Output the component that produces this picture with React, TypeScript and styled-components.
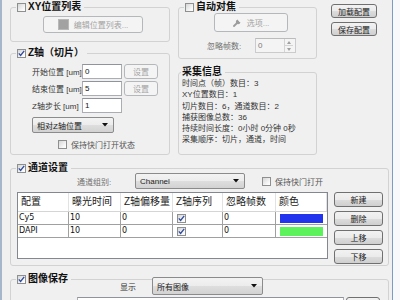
import styled, { createGlobalStyle } from 'styled-components';

const GlobalStyle = createGlobalStyle`
  html, body {
    margin: 0;
    padding: 0;
  }
  body {
    width: 400px;
    height: 300px;
    overflow: hidden;
    background: #f8f9fa;
    font-family: 'Liberation Sans', 'Noto Sans CJK SC', sans-serif;
    color: #222;
  }
`;

const Screen = styled.div`
  width: 400px;
  height: 300px;
  overflow: hidden;
`;

const Frame = styled.div`
  box-sizing: border-box;
  width: 393px;
  height: 300px;
  border-left: 2px solid #a5b6cb;
  border-right: 1px solid #7d9bc4;
  background: #f0f0f0;
  padding: 1px 3px 0 8px;
  display: flex;
  flex-direction: column;
  gap: 7px;
  overflow: hidden;
`;

const TopSection = styled.div`
  display: flex;
  align-items: flex-start;
  height: 154px;
  flex-shrink: 0;
`;

const Column = styled.div<{ $w: number; $ml?: number; $gap: number; $mt?: number }>`
  width: ${(p) => p.$w}px;
  margin-left: ${(p) => p.$ml || 0}px;
  margin-top: ${(p) => p.$mt || 0}px;
  display: flex;
  flex-direction: column;
  gap: ${(p) => p.$gap}px;
  flex-shrink: 0;
`;

const Group = styled.fieldset<{ $h?: number; $pl?: number }>`
  margin: 0;
  min-width: 0;
  box-sizing: border-box;
  padding: 0 6px 0 ${(p) => (p.$pl === undefined ? 6 : p.$pl)}px;
  border: 1px solid #d2d2d2;
  border-radius: 3px;
  height: ${(p) => (p.$h ? `${p.$h}px` : 'auto')};
  flex-shrink: 0;
`;

const Legend = styled.legend`
  display: flex;
  align-items: center;
  gap: 2px;
  padding: 0 3px 0 1px;
  margin-left: -1px;
  height: 12px;
  line-height: 12px;
  font-size: 10px;
  font-weight: bold;
  color: #111;
`;

const CheckBox = styled.span`
  width: 9px;
  height: 9px;
  box-sizing: border-box;
  border: 1px solid #8e8f8f;
  background: linear-gradient(135deg, #d6d6d6, #f7f7f7 70%, #ffffff);
  display: inline-flex;
  align-items: center;
  justify-content: center;
  flex-shrink: 0;
`;

const Check = ({ checked }: { checked?: boolean }) => (
  <CheckBox>
    {checked && (
      <svg width="7" height="7" viewBox="0 0 7 7">
        <path d="M0.8 3.4 L2.6 5.4 L6.2 0.9" fill="none" stroke="#2d4a9c" strokeWidth="1.3" />
      </svg>
    )}
  </CheckBox>
);

const Button = styled.button<{ $w: number; $h: number; $ml?: number; $mt?: number }>`
  box-sizing: border-box;
  width: ${(p) => p.$w}px;
  height: ${(p) => p.$h}px;
  margin: ${(p) => p.$mt || 0}px 0 0 ${(p) => p.$ml || 0}px;
  padding: 0;
  border: 1px solid #707070;
  border-radius: 3px;
  background: linear-gradient(#f2f2f2 0%, #ebebeb 50%, #dddddd 51%, #cfcfcf 100%);
  font-family: inherit;
  font-size: 8px;
  color: #222;
  display: flex;
  align-items: center;
  justify-content: center;
  gap: 5px;
  flex-shrink: 0;

  &:disabled {
    border-color: #b5b8bb;
    background: #f4f4f4;
    color: #a3a3a3;
  }
`;

const Field = styled.div<{ $w: number; $h: number; $align?: string; $disabled?: boolean; $ml?: number }>`
  box-sizing: border-box;
  width: ${(p) => p.$w}px;
  height: ${(p) => p.$h}px;
  margin-left: ${(p) => p.$ml || 0}px;
  border: 1px solid ${(p) => (p.$disabled ? '#c9cbcd' : '#abadb3')};
  border-top-color: ${(p) => (p.$disabled ? '#b9bbbd' : '#8f939b')};
  background: ${(p) => (p.$disabled ? '#f4f4f4' : '#ffffff')};
  font-size: 8px;
  color: ${(p) => (p.$disabled ? '#7a7a7a' : '#111')};
  display: flex;
  align-items: center;
  justify-content: ${(p) => p.$align || 'flex-start'};
  padding: 0 2px;
  flex-shrink: 0;
`;

const Combo = styled.div<{ $w: number; $h: number; $ml?: number }>`
  box-sizing: border-box;
  width: ${(p) => p.$w}px;
  height: ${(p) => p.$h}px;
  margin-left: ${(p) => p.$ml || 0}px;
  border: 1px solid #8b8b8b;
  border-radius: 2px;
  background: linear-gradient(#f3f3f3 0%, #ececec 50%, #dedede 51%, #d2d2d2 100%);
  display: flex;
  align-items: center;
  justify-content: space-between;
  padding: 0 5px 0 4px;
  font-size: 8px;
  color: #222;
  flex-shrink: 0;
`;

const Arrow = () => (
  <svg width="6" height="4" viewBox="0 0 6 4">
    <path d="M0 0 H6 L3 3.5 Z" fill="#111" />
  </svg>
);

const Row = styled.div<{ $mt?: number; $pl?: number; $gap?: number; $h?: number; $top?: boolean }>`
  display: flex;
  align-items: ${(p) => (p.$top ? 'flex-start' : 'center')};
  margin-top: ${(p) => p.$mt || 0}px;
  padding-left: ${(p) => p.$pl || 0}px;
  gap: ${(p) => p.$gap || 0}px;
  height: ${(p) => (p.$h ? `${p.$h}px` : 'auto')};
`;

const Label = styled.span<{ $w?: number; $muted?: boolean }>`
  width: ${(p) => (p.$w ? `${p.$w}px` : 'auto')};
  font-size: 8px;
  color: ${(p) => (p.$muted ? '#6f6f6f' : '#333')};
  white-space: nowrap;
  flex-shrink: 0;
`;

const CheckLabel = styled.span<{ $ml?: number }>`
  display: flex;
  align-items: center;
  gap: 4px;
  margin-left: ${(p) => p.$ml || 0}px;
  font-size: 8px;
  color: #555;
  white-space: nowrap;
`;

const InfoText = styled.div`
  font-size: 8px;
  line-height: 11.3px;
  color: #333;
  white-space: nowrap;
`;

const Spin = styled.div`
  display: flex;
  flex-direction: column;
  margin-left: auto;
  width: 8px;
  height: 13px;
  border-left: 1px solid #d4d4d4;
`;

const SpinHalf = styled.span`
  flex: 1;
  display: flex;
  align-items: center;
  justify-content: center;
  & + & {
    border-top: 1px solid #d4d4d4;
  }
`;

const Tri = ({ up }: { up?: boolean }) => (
  <svg width="4" height="3" viewBox="0 0 4 3">
    <path d={up ? 'M0 3 H4 L2 0 Z' : 'M0 0 H4 L2 3 Z'} fill="#a0a0a0" />
  </svg>
);

const Table = styled.div`
  box-sizing: border-box;
  width: 311px;
  height: 67px;
  border: 1px solid #828790;
  background: #ffffff;
  flex-shrink: 0;
`;

const cols = '51px 52px 52px 50px 53px 51px';

const HeadRow = styled.div`
  display: grid;
  grid-template-columns: ${cols};
  height: 18px;
  border-bottom: 1px solid #d5d5d5;
`;

const HeadCell = styled.div`
  border-right: 1px solid #e2e2e2;
  font-size: 10px;
  line-height: 18px;
  padding-left: 3px;
  color: #222;
  white-space: nowrap;
  overflow: hidden;
`;

const DataRow = styled.div`
  display: grid;
  grid-template-columns: ${cols};
  height: 13px;
`;

const DataCell = styled.div<{ $pl?: number }>`
  box-sizing: border-box;
  border-right: 1px solid #a0a0a0;
  border-bottom: 1px solid #a0a0a0;
  font-family: 'DejaVu Sans', sans-serif;
  font-size: 8px;
  line-height: 12px;
  padding-left: ${(p) => p.$pl || 1}px;
  display: flex;
  align-items: center;
  color: #111;
  &:last-child {
    border-right: none;
  }
`;

const ColorBar = styled.span<{ $c: string }>`
  width: 43px;
  height: 9px;
  margin-left: 3px;
  background: ${(p) => p.$c};
`;

const SideButtons = styled.div`
  display: flex;
  flex-direction: column;
  gap: 4px;
  margin-left: 6px;
`;

const GraySquare = styled.span`
  width: 9px;
  height: 9px;
  background: #a2a2a2;
  border: 1px solid #b8b8b8;
`;

const Wrench = () => (
  <svg width="9" height="9" viewBox="0 0 9 9">
    <path d="M1 8 L5.2 3.8" stroke="#9c9c9c" strokeWidth="1.8" strokeLinecap="round" />
    <path d="M5 1.6 A2.3 2.3 0 1 0 7.4 4 L6.4 3.9 L5.2 2.8 Z" fill="#9c9c9c" />
  </svg>
);

const channels = [
  { name: 'Cy5', exp: '10', z: '0', skip: '0', color: '#2233ee' },
  { name: 'DAPI', exp: '10', z: '0', skip: '0', color: '#5cf25c' },
];

export default function App() {
  return (
    <Screen>
      <GlobalStyle />
      <Frame>
        <TopSection>
          <Column $w={160} $gap={5}>
            <Group $h={41}>
              <Legend>
                <Check />
                XY位置列表
              </Legend>
              <Button disabled $w={100} $h={17} $ml={26} $mt={3}>
                <GraySquare />
                编辑位置列表...
              </Button>
            </Group>
            <Group $h={108}>
              <Legend>
                <Check checked />
                Z轴（切片）
              </Legend>
              <Row $mt={5} $pl={15} $h={15}>
                <Label $w={50}>开始位置 [um]</Label>
                <Field $w={40} $h={15}>0</Field>
                <Button disabled $w={34} $h={15} $ml={2}>设置</Button>
              </Row>
              <Row $mt={2} $pl={15} $h={15}>
                <Label $w={50}>结束位置 [um]</Label>
                <Field $w={40} $h={15}>5</Field>
                <Button disabled $w={34} $h={15} $ml={2}>设置</Button>
              </Row>
              <Row $mt={2} $pl={15} $h={15}>
                <Label $w={50}>Z轴步长 [um]</Label>
                <Field $w={40} $h={15}>1</Field>
              </Row>
              <Row $mt={4} $pl={15}>
                <Combo $w={82} $h={16}>
                  相对Z轴位置
                  <Arrow />
                </Combo>
              </Row>
              <Row $mt={6} $pl={41}>
                <CheckLabel>
                  <Check />
                  保持快门打开状态
                </CheckLabel>
              </Row>
            </Group>
          </Column>

          <Column $w={139} $ml={8} $gap={7}>
            <Group $h={58}>
              <Legend>
                <Check />
                自动对焦
              </Legend>
              <Button disabled $w={74} $h={19} $ml={29}>
                <Wrench />
                选项...
              </Button>
              <Row $mt={6} $pl={22}>
                <Label $w={48} $muted>忽略帧数:</Label>
                <Field $w={41} $h={15} $align="flex-end" $disabled>
                  0
                  <Spin>
                    <SpinHalf>
                      <Tri up />
                    </SpinHalf>
                    <SpinHalf>
                      <Tri />
                    </SpinHalf>
                  </Spin>
                </Field>
              </Row>
            </Group>
            <Group $h={89} $pl={3}>
              <Legend>采集信息</Legend>
              <InfoText>时间点（帧）数目：3</InfoText>
              <InfoText>XY位置数目：1</InfoText>
              <InfoText>切片数目：6，通道数目：2</InfoText>
              <InfoText>捕获图像总数：36</InfoText>
              <InfoText>持续时间长度：0小时 0分钟 0秒</InfoText>
              <InfoText>采集顺序：切片，通道，时间</InfoText>
            </Group>
          </Column>

          <Column $w={46} $ml={14} $mt={3} $gap={4}>
            <Button $w={46} $h={14}>加载配置</Button>
            <Button $w={46} $h={14}>保存配置</Button>
          </Column>
        </TopSection>

        <Group $h={104}>
          <Legend>
            <Check checked />
            通道设置
          </Legend>
          <Row $mt={-1} $pl={60}>
            <Label $w={58} $muted>通道组别:</Label>
            <Combo $w={110} $h={16}>
              Channel
              <Arrow />
            </Combo>
            <CheckLabel $ml={17}>
              <Check />
              保持快门打开
            </CheckLabel>
          </Row>
          <Row $mt={3} $top>
            <Table>
              <HeadRow>
                <HeadCell>配置</HeadCell>
                <HeadCell>曝光时间</HeadCell>
                <HeadCell>Z轴偏移量</HeadCell>
                <HeadCell>Z轴序列</HeadCell>
                <HeadCell>忽略帧数</HeadCell>
                <HeadCell>颜色</HeadCell>
              </HeadRow>
              {channels.map((c) => (
                <DataRow key={c.name}>
                  <DataCell>{c.name}</DataCell>
                  <DataCell>{c.exp}</DataCell>
                  <DataCell>{c.z}</DataCell>
                  <DataCell $pl={4}>
                    <Check checked />
                  </DataCell>
                  <DataCell>{c.skip}</DataCell>
                  <DataCell>
                    <ColorBar $c={c.color} />
                  </DataCell>
                </DataRow>
              ))}
            </Table>
            <SideButtons>
              <Button $w={49} $h={15}>新建</Button>
              <Button $w={49} $h={15}>删除</Button>
              <Button $w={49} $h={15}>上移</Button>
              <Button $w={49} $h={15}>下移</Button>
            </SideButtons>
          </Row>
        </Group>

        <Group $h={40}>
          <Legend>
            <Check checked />
            图像保存
          </Legend>
          <Row $mt={-8} $pl={103}>
            <Label $w={32}>显示</Label>
            <Combo $w={111} $h={18}>
              所有图像
              <Arrow />
            </Combo>
          </Row>
          <Row $mt={2} $pl={60}>
            <Field $w={267} $h={15} />
            <Button $w={34} $h={15} $ml={2} aria-label="浏览" />
          </Row>
        </Group>
      </Frame>
    </Screen>
  );
}
